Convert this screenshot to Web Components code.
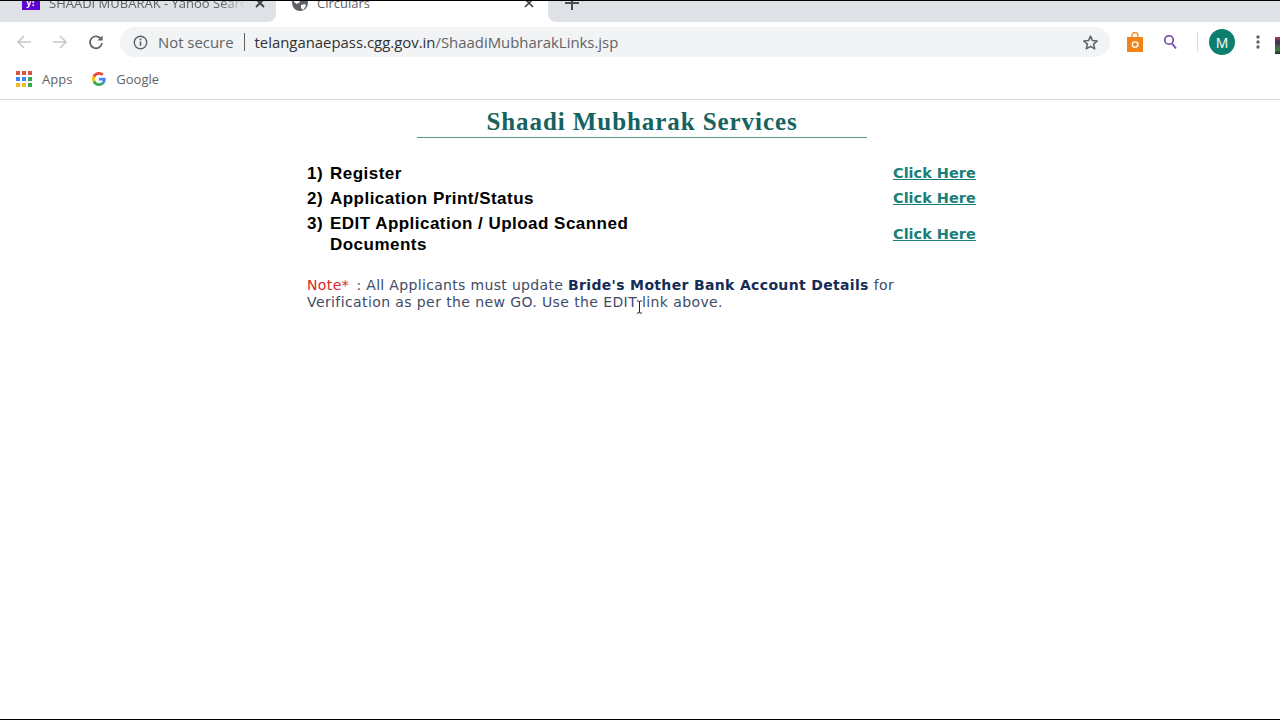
<!DOCTYPE html>
<html>
<head>
<meta charset="utf-8">
<title>Circulars</title>
<style>
    html, body { margin: 0; height: 100%; background: #fff; overflow: hidden; }
    body { display: flex; flex-direction: column; height: 720px; position: relative; }
    service-page { flex: 1; }
</style>
</head>
<body>
<browser-chrome></browser-chrome>
<service-page>
    <span slot="title">Shaadi Mubharak Services</span>
    <service-row num="1)">Register</service-row>
    <service-row num="2)">Application Print/Status</service-row>
    <service-row num="3)">EDIT Application / Upload Scanned Documents</service-row>
</service-page>
<script>
const chromeTemplate = `
    <style>
        :host { display: block; font-family: "Open Sans", "Noto Sans", sans-serif; flex: none; position: relative; }
        svg { display: block; flex: none; }
        #strip {
            height: 21px;
            background: #fff;
            border-top: 1px solid #000;
            display: flex;
            align-items: flex-end;
            overflow: hidden;
        }
        .tab {
            height: 38px;
            flex: none;
            display: flex;
            align-items: center;
            box-sizing: border-box;
            font-size: 13px;
            color: #5f6368;
            white-space: nowrap;
        }
        #tab1 { width: 276px; padding-left: 22px; background: #dee1e6; border-radius: 0 0 8px 0; }
        #active { width: 272px; background: #fff; padding-left: 16px; }
        #rest { flex: 1; height: 38px; background: #dee1e6; border-radius: 0 0 0 8px; display: flex; align-items: center; padding-left: 17px; }
        .title { overflow: hidden; }
        #t1 {
            width: 196px;
            margin-left: 9px;
            -webkit-mask-image: linear-gradient(to right, #000 88%, transparent);
            mask-image: linear-gradient(to right, #000 88%, transparent);
        }
        #t2 { width: 201px; margin-left: 9px; }
        #close1 { margin-left: 10px; }
        #close2 { margin-left: 6px; }
        #plus { margin-top: -1px; }

        #toolbar {
            height: 40px;
            display: flex;
            align-items: center;
            background: #fff;
            position: relative;
        }
        #nav { display: flex; align-items: center; gap: 20px; padding-left: 16px; width: 120px; box-sizing: border-box; }
        #omni {
            width: 990px;
            height: 30px;
            border-radius: 15px;
            background: #f1f3f4;
            display: flex;
            align-items: center;
            font-size: 14.9px;
            box-sizing: border-box;
            padding-left: 13px;
        }
        #insecure { color: #5f6368; margin-left: 10px; }
        #sep { width: 1px; height: 18px; background: #5f6368; margin: 0 10px 0 10px; }
        #url { color: #5f6368; flex: 1; white-space: nowrap; }
        #url b { color: #303134; font-weight: 400; }
        #right { display: flex; align-items: center; margin-left: 16px; flex: 1; position: relative; }
        #avatar {
            width: 26px; height: 26px; border-radius: 50%;
            background: #0d7f6f; color: #fff;
            font-size: 14px;
            display: flex; align-items: center; justify-content: center;
            margin-left: 11px;
        }
        #divider { width: 1px; height: 20px; background: #dadce0; margin-left: 20px; }
        #dots { margin-left: 21px; }
        #sliver {
            position: absolute; left: 149px; top: 8px; width: 5px; height: 17px;
            background: linear-gradient(#a44 0, #335 30%, #555 55%, #383 75%, #223 100%);
        }

        #bookmarks {
            height: 34px;
            display: flex;
            align-items: center;
            background: #fff;
            border-bottom: 1px solid #d6d6d6;
            font-size: 13px;
            color: #5f6368;
            padding: 0 0 3px 16px;
        }
        #bookmarks span { margin-left: 10px; }
        #g { margin-left: 20px; }
    </style>

    <div id="strip">
        <div class="tab" id="tab1">
            <svg width="18" height="14" viewBox="0 0 18 14"><rect width="18" height="14" fill="#5f01d1"/><text x="4" y="10" font-family="Liberation Sans" font-weight="700" font-size="10" fill="#fff">y!</text></svg>
            <div class="title" id="t1">SHAADI MUBARAK - Yahoo Search</div>
            <svg id="close1" width="10" height="10" viewBox="0 0 10 10"><path d="M1 1l8 8M9 1l-8 8" stroke="#3c4043" stroke-width="1.8"/></svg>
        </div>
        <div class="tab" id="active">
            <svg width="16" height="16" viewBox="0 0 16 16"><circle cx="8" cy="8" r="8" fill="#5f6368"/><path d="M3 3l4 1 1 3-3 2-3-2zM9 10l4-1 1 2-3 4-2-2z" fill="#fff"/></svg>
            <div class="title" id="t2">Circulars</div>
            <svg id="close2" width="10" height="10" viewBox="0 0 10 10"><path d="M1 1l8 8M9 1l-8 8" stroke="#3c4043" stroke-width="1.6"/></svg>
        </div>
        <div id="rest">
            <svg id="plus" width="14" height="38" viewBox="0 0 14 38"><path d="M7 12v14M0 19h14" stroke="#4a4d51" stroke-width="2"/></svg>
        </div>
    </div>

    <div id="toolbar">
        <div id="nav">
            <svg width="16" height="16" viewBox="0 0 16 16"><path d="M15 8H2M8 2L2 8l6 6" fill="none" stroke="#c4c7cb" stroke-width="1.6"/></svg>
            <svg width="16" height="16" viewBox="0 0 16 16"><path d="M1 8h13M8 2l6 6-6 6" fill="none" stroke="#c4c7cb" stroke-width="1.6"/></svg>
            <svg width="16" height="16" viewBox="0 0 16 16"><path d="M13.2 5.2A6 6 0 1 0 14 9" fill="none" stroke="#5f6368" stroke-width="1.7"/><path d="M14.6 1.4v5.2H9.4z" fill="#5f6368"/></svg>
        </div>
        <div id="omni">
            <svg width="15" height="15" viewBox="0 0 15 15"><circle cx="7.5" cy="7.5" r="6.2" fill="none" stroke="#5f6368" stroke-width="1.4"/><path d="M7.5 6.6v4.2" stroke="#5f6368" stroke-width="1.6"/><circle cx="7.5" cy="4.5" r="1" fill="#5f6368"/></svg>
            <span id="insecure">Not secure</span>
            <span id="sep"></span>
            <span id="url"><b>telanganaepass.cgg.gov.in</b>/ShaadiMubharakLinks.jsp</span>
            <svg width="17" height="17" viewBox="0 0 24 24" style="margin-right:11px"><path d="M12 3l2.7 6.2 6.8.6-5.1 4.5 1.5 6.6L12 17.4l-5.9 3.5 1.5-6.6L2.500 9.800l6.800-.6z" fill="none" stroke="#5f6368" stroke-width="2.200" stroke-linejoin="round"/></svg>
        </div>
        <div id="right">
            <svg width="18" height="20" viewBox="0 0 18 20"><path d="M6 5V3.500a3 3 0 0 1 6 0V5" fill="none" stroke="#f08a1d" stroke-width="1.300"/><path d="M1 5h16v15H1z" fill="#f0831a"/><circle cx="9" cy="12.500" r="2.700" fill="none" stroke="#fff" stroke-width="1.300"/><path d="M11.700 10v5" stroke="#fff" stroke-width="1.200"/></svg>
            <svg style="margin-left:19px" width="14" height="16" viewBox="0 0 14 16"><circle cx="6" cy="6" r="4.300" fill="none" stroke="#6b3fa0" stroke-width="1.600"/><path d="M9 9.500l4 5" stroke="#7d4bb0" stroke-width="2"/></svg>
            <div id="divider"></div>
            <div id="avatar">M</div>
            <svg id="dots" width="4" height="16" viewBox="0 0 4 16"><circle cx="2" cy="3" r="1.700" fill="#5f6368"/><circle cx="2" cy="8" r="1.700" fill="#5f6368"/><circle cx="2" cy="13" r="1.700" fill="#5f6368"/></svg>
            <div id="sliver"></div>
        </div>
    </div>

    <div id="bookmarks">
        <svg width="16" height="16" viewBox="0 0 16 16">
            <g fill="#d9503f"><rect x="0" y="0" width="4" height="4"/><rect x="6" y="0" width="4" height="4"/><rect x="12" y="0" width="4" height="4"/></g>
            <g fill="#4285f4"><rect x="0" y="6" width="4" height="4"/><rect x="6" y="6" width="4" height="4"/></g>
            <rect x="12" y="6" width="4" height="4" fill="#34a853"/>
            <g fill="#f2b92c"><rect x="0" y="12" width="4" height="4"/><rect x="6" y="12" width="4" height="4"/></g>
            <rect x="12" y="12" width="4" height="4" fill="#34a853"/>
        </svg>
        <span>Apps</span>
        <svg id="g" width="14" height="14" viewBox="0 0 48 48">
            <path fill="#ea4335" d="M24 9.500c3.500 0 6.700 1.300 9.100 3.500l6.800-6.800C35.800 2.400 30.300 0 24 0 14.600 0 6.500 5.400 2.600 13.200l7.900 6.200C12.400 13.700 17.700 9.500 24 9.500z"/>
            <path fill="#4285f4" d="M47 24.500c0-1.600-.1-3.100-.4-4.500H24v9h12.900c-.6 3-2.300 5.500-4.800 7.200l7.700 6C44.300 37.900 47 31.800 47 24.500z"/>
            <path fill="#fbbc05" d="M10.500 28.600c-.5-1.400-.8-3-.8-4.600s.3-3.200.8-4.600l-7.900-6.200C.9 16.500 0 20.100 0 24s.9 7.500 2.600 10.800z"/>
            <path fill="#34a853" d="M24 48c6.500 0 11.900-2.100 15.800-5.800l-7.700-6c-2.100 1.400-4.900 2.300-8.100 2.300-6.300 0-11.600-4.200-13.500-9.900l-7.900 6.200C6.500 42.600 14.600 48 24 48z"/>
        </svg>
        <span>Google</span>
    </div>
`

class BrowserChrome extends HTMLElement {

    constructor() {
        super();

        const shadowRoot = this.attachShadow({ mode: "open" })
        shadowRoot.innerHTML = chromeTemplate
    }

}

const pageTemplate = `
    <style>
        :host {
            display: block;
            background: #fff;
            border-bottom: 1px solid #000;
            position: relative;
        }
        #wrap { width: 670px; margin-left: 307px; }
        #heading {
            width: 450px;
            margin: 7px 0 0 110px;
            border-bottom: 1px solid #5c9490;
            text-align: center;
            font: 700 25px/29px "Liberation Serif", serif;
            letter-spacing: 0.93px;
            color: #15625f;
            padding-bottom: 1px;
        }
        #rows { display: flex; flex-direction: column; margin-top: 23px; }
        #note {
            margin-top: 19.5px;
            font: 14px/17px "DejaVu Sans", Verdana, sans-serif;
            letter-spacing: 0.4px;
            color: #3e4c66;
            width: 620px;
        }
        #note em { font-style: normal; color: #d9262a; margin-right: 2.5px; }
        #note span { letter-spacing: 0.33px; }
        #note b { color: #152c55; letter-spacing: 0.34px; }
        #cursor { position: absolute; left: 636px; top: 200px; }
    </style>

    <div id="wrap">
        <div id="heading"><slot name="title"></slot></div>
        <div id="rows"><slot></slot></div>
        <div id="note"><em>Note*</em><span> : All Applicants must update </span><b>Bride's Mother Bank Account Details</b> for<br>Verification as per the new GO. Use the EDIT link above.</div>
    </div>
    <svg id="cursor" width="7" height="14" viewBox="0 0 7 14"><path d="M1 1h2l.5.5L4 1h2M3.500 1.500v11M1 13h2l.5-.5.5.5h2" fill="none" stroke="#222" stroke-width="1"/></svg>
`

class ServicePage extends HTMLElement {

    constructor() {
        super();

        const shadowRoot = this.attachShadow({ mode: "open" })
        shadowRoot.innerHTML = pageTemplate
    }

}

const rowTemplate = `
    <style>
        :host {
            display: flex;
            align-items: center;
            padding: 1.75px 0;
        }
        #num, #label {
            font: 700 17px/21.5px "Liberation Sans", Arial, sans-serif;
            letter-spacing: 0.47px;
            color: #000;
            flex: none;
        }
        #num { width: 23px; align-self: flex-start; white-space: nowrap; }
        #label { width: 320px; }
        a {
            margin-left: 243px;
            font: 700 14.5px/21px "DejaVu Sans", Verdana, sans-serif;
            color: #1a7f78;
            text-decoration: underline;
            white-space: nowrap;
        }
    </style>
    <span id="num"></span>
    <span id="label"><slot></slot></span>
    <a href="#">Click Here</a>
`

class ServiceRow extends HTMLElement {

    constructor() {
        super();

        const shadowRoot = this.attachShadow({ mode: "open" })
        shadowRoot.innerHTML = rowTemplate
    }

    connectedCallback() {
        this.shadowRoot.getElementById('num').textContent = this.getAttribute('num')
    }

}

customElements.define('browser-chrome', BrowserChrome)
customElements.define('service-page', ServicePage)
customElements.define('service-row', ServiceRow)
</script>
</body>
</html>
